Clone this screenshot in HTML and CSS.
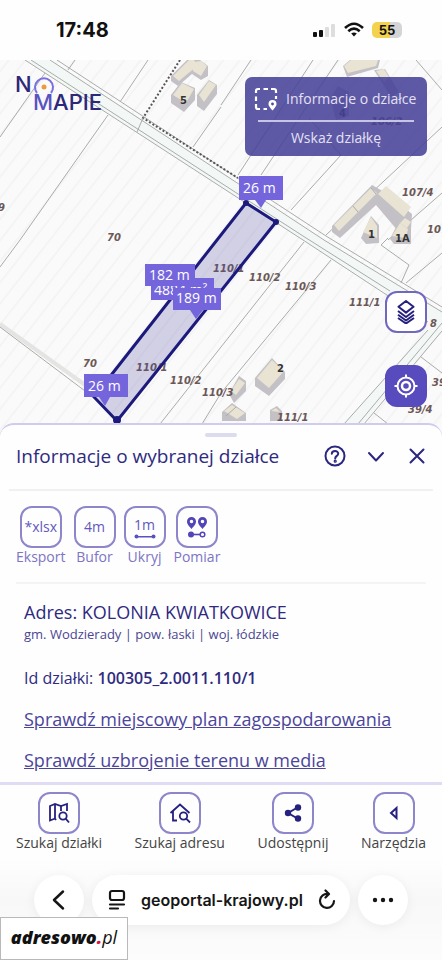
FILE: index.html
```html
<!DOCTYPE html>
<html lang="pl">
<head>
<meta charset="UTF-8">
<meta name="viewport" content="width=device-width, initial-scale=1.0">
<title>Geoportal - Informacje o działce</title>
<link rel="stylesheet" href="styles.css">
</head>
<body>
  <!-- Phone status bar -->
  <header class="status-bar">
    <span class="status-time">17:48</span>
    <div class="status-icons">
      <svg width="24" height="16" viewBox="0 0 24 16">
        <rect x="1" y="10" width="4" height="5" rx="1" fill="#111"/>
        <rect x="7" y="8" width="4" height="7" rx="1" fill="#111"/>
        <rect x="13" y="5" width="4" height="10" rx="1" fill="#ddd"/>
        <rect x="19" y="2" width="4" height="13" rx="1" fill="#ddd"/>
      </svg>
      <svg width="20" height="16" viewBox="0 0 20 16" fill="none" stroke="#111" stroke-width="2.6">
        <path d="M1 6 Q10 -2.500 19 6M4.300 9.300 Q10 4 15.700 9.300"/>
        <path d="M10 14.500 L7.200 11.600 Q10 9.400 12.800 11.600Z" fill="#111" stroke="none"/>
      </svg>
      <span class="battery">55</span>
    </div>
  </header>

  <!-- Map -->
  <main class="map">
    <svg class="map-canvas" viewBox="0 60 442 380" preserveAspectRatio="xMidYMin slice">
      <defs>
        <pattern id="furrows" width="26" height="26" patternUnits="userSpaceOnUse" patternTransform="rotate(38)">
          <path d="M5 0V26M18 0V26" stroke="#f4f4f5" stroke-width="2"/>
        </pattern>
      </defs>
      <rect y="60" width="442" height="380" fill="#fafafa"/>
      <rect y="60" width="442" height="380" fill="url(#furrows)"/>

      <!-- roads -->
      <path class="road" d="M25 60H50L324 240L442 312V328L303 240Z"/>
      <path class="road" d="M428 330L344 424H362L442 330V320Z"/>
      <path class="road-edge" d="M25 60L303 240L428 322M31 60L303 236L390 291M50 60L324 240L442 312M57 60L326 236L442 307"/>
      <path class="road-edge" d="M428 330L344 424M442 323L358 424M442 331L364 424"/>
      <path class="dotted" d="M180 60L143 118L238 178"/>

      <!-- parcel borders -->
      <path class="border" d="M45 73L0 137M75 60L68 70M148 60L120 102M108 115L20 240L0 267M221 107L193 147M143 118L137 132M251 60L221 105M313 60L238 175M338 60L261 175M309 118L341 155L291 210M442 127L326 235M416 60L442 90M442 193L388 240M304 242L221 347L160 424M331 260L221 393L202 424M442 253L406 283M381 245L409 265L401 283M381 245L388 238M421 357L442 373M374 413L388 424"/>
      <path d="M0 324L95 392" stroke="#e4e5e3" stroke-width="4"/>
      <path class="border" d="M0 327L93 397"/>

      <!-- buildings -->
      <g class="shade">
        <path d="M171 76L187 60H200L208 66V76L201 80L192 74L178 86L171 81Z"/>
        <path d="M171 95L181 82L195 88V100L184 112L171 103Z"/>
        <path d="M197 95L209 80L217 85V94L204 111L197 106Z"/>
        <path d="M343 66L350 60H380L378 68L347 77ZM374 70L385 69L399 92L391 97Z"/>
        <path d="M332 226L372 185L386 193L412 214L411 229L398 231L376 205L340 238L332 232Z"/>
        <path d="M361 238L371 216L379 225V243L366 244Z"/>
        <path d="M390 239L399 221L411 229V244H394Z"/>
        <path d="M330 98L338 86L349 92V116L336 120Z"/>
        <path d="M255 378L272 358L285 372V379L269 396L255 386Z"/>
        <path d="M229 394L239 376L246 381V391L234 403Z"/>
        <path d="M222 412L232 403L246 413V421H222ZM270 410L277 406L282 411V421H270Z"/>
      </g>
      <g class="roof">
        <path d="M173 76L189 60H194L197 66L179 81ZM193 62L201 61L207 66L201 76L193 71Z"/>
        <path d="M173 95L182 83L194 89L186 103Z"/>
        <path d="M199 95L209 81L216 85L204 102Z"/>
        <path d="M344 66L351 60H378L376 66L348 73ZM376 71L384 69L389 77L384 82Z"/>
        <path d="M334 225L371 188L377 193L339 231ZM378 194L386 186L411 207L404 217ZM400 223L405 218L411 222L407 228Z"/>
        <path d="M363 232L371 217L377 226V238Z"/>
        <path d="M392 236L400 223L408 229L406 238Z"/>
        <path d="M257 378L272 360L284 371L269 388Z"/>
        <path d="M231 391L239 379L245 383L236 395ZM224 411L232 405L245 413L237 419ZM271 411L276 408L280 412Z"/>
      </g>
      <path class="border" d="M353 206L358 212M371 188L376 194M226 416L236 407"/>

      <!-- parcel and house numbers -->
      <g class="parcel-no">
        <text x="107" y="241">70</text>
        <text x="83" y="367">70</text>
        <text x="-2" y="211">9</text>
        <text x="213" y="272">110/1</text>
        <text x="249" y="281">110/2</text>
        <text x="285" y="290">110/3</text>
        <text x="349" y="306">111/1</text>
        <text x="136" y="371">110/1</text>
        <text x="170" y="384">110/2</text>
        <text x="202" y="396">110/3</text>
        <text x="277" y="421">111/1</text>
        <text x="402" y="196">107/4</text>
        <text x="427" y="233">107/5</text>
        <text x="371" y="125">106/2</text>
        <text x="430" y="327">8</text>
        <text x="432" y="386">39/3</text>
        <text x="408" y="413">39/4</text>
      </g>
      <g class="house-no">
        <text x="180" y="104">5</text>
        <text x="339" y="117">4</text>
        <text x="368" y="238">1</text>
        <text x="395" y="242">1A</text>
        <text x="277" y="372">2</text>
      </g>

      <!-- selected parcel -->
      <path class="parcel" d="M246 203L276 222L117 421L94 397Z"/>
      <g fill="#1c1a7c">
        <circle cx="246" cy="203" r="3"/><circle cx="276" cy="222" r="3"/><circle cx="117" cy="420" r="4"/>
      </g>

      <g class="measure">
        <path d="M151 278H214V300H151Z"/>
        <text x="154" y="295">4884 m²</text>
        <path d="M239 176H283V200H266L261 208L255 200H239Z"/>
        <text x="243" y="193">26 m</text>
        <path d="M145 264H195V286H145Z"/>
        <text x="149" y="280">182 m</text>
        <path d="M173 288H221V310H203L196 319L190 310H173Z"/>
        <text x="176" y="303">189 m</text>
        <path d="M84 374H128V397H110L105 406L99 397H84Z"/>
        <text x="88" y="391">26 m</text>
      </g>

      <!-- logo -->
      <g class="logo">
        <text x="15" y="92">N</text>
        <text x="33" y="110"><tspan fill="#5a52c0">M</tspan>APIE</text>
        <path d="M37 93A9 9 0 1 1 51 93" fill="none" stroke="#7a70df" stroke-width="2"/>
        <circle cx="44" cy="87" r="2.500" fill="#ee9a3a"/>
      </g>
    </svg>

    <section class="map-panel">
      <div class="map-panel-title">
        <svg width="24" height="24" viewBox="0 0 24 24" fill="none" stroke="#fff" stroke-width="2.200">
          <path d="M2 6V4Q2 2 4 2H6M9.500 2H14M17 2H20Q22 2 22 4V6M22 9V12M2 9.500V14M2 17V20Q2 22 4 22H6M9.500 22H13"/>
          <path d="M18.500 23.500C15 19.500 14.500 18.500 14.500 17A4 4 0 0 1 22.500 17C22.500 18.500 22 19.500 18.500 23.500Z" fill="#fff" stroke="none"/>
          <circle cx="18.500" cy="17" r="1.400" fill="#4d4899" stroke="none"/>
        </svg>
        <span>Informacje o działce</span>
      </div>
      <p class="map-panel-hint">Wskaż działkę</p>
    </section>

    <div class="map-buttons">
      <button class="map-btn" type="button" aria-label="Warstwy">
        <svg width="24" height="24" viewBox="0 0 24 24" fill="none" stroke="#26217f" stroke-width="2" stroke-linejoin="round">
          <path d="M12 1L19.500 6.800L12 12.600L4.500 6.800ZM4 11L12 17L20 11M4 14.700L12 20.500L20 14.700M4 18L12 23.500L20 18"/>
        </svg>
      </button>
      <button class="map-btn map-btn-active" type="button" aria-label="Moja lokalizacja">
        <svg width="24" height="24" viewBox="0 0 24 24" fill="none" stroke="#fff" stroke-width="2">
          <circle cx="12" cy="12" r="8.500"/>
          <circle cx="12" cy="12" r="4" stroke-width="2.500"/>
          <path d="M12 .5V4M12 20V23.500M.5 12H4M20 12H23.500"/>
        </svg>
      </button>
    </div>
  </main>

  <!-- Parcel details -->
  <section class="sheet">
    <div class="sheet-handle"></div>
    <div class="sheet-header">
      <h1>Informacje o wybranej działce</h1>
      <button class="icon-btn" type="button" aria-label="Pomoc">
        <svg width="22" height="22" viewBox="0 0 22 22" fill="none" stroke="#2b267f" stroke-width="2">
          <circle cx="11" cy="11" r="9.500"/>
          <path d="M7.800 8.800C8 5 14.300 5.200 14.200 8.700C14.100 11 11.200 10.800 11.200 13.500" stroke-linecap="round"/>
          <circle cx="11.200" cy="16.200" r=".6"/>
        </svg>
      </button>
      <button class="icon-btn" type="button" aria-label="Zwiń">
        <svg width="22" height="22" viewBox="0 0 22 22" fill="none" stroke="#2b267f" stroke-width="2" stroke-linecap="round" stroke-linejoin="round"><path d="M4 8L11 15.500L18 8"/></svg>
      </button>
      <button class="icon-btn" type="button" aria-label="Zamknij">
        <svg width="22" height="22" viewBox="0 0 22 22" fill="none" stroke="#2b267f" stroke-width="2" stroke-linecap="round"><path d="M4.500 4.500L17.500 17.500M17.500 4.500L4.500 17.500"/></svg>
      </button>
    </div>

    <div class="tools">
      <button class="tool" type="button">
        <span class="tile">*xlsx</span>
        <span>Eksport</span>
      </button>
      <button class="tool" type="button">
        <span class="tile">4m</span>
        <span>Bufor</span>
      </button>
      <button class="tool" type="button">
        <span class="tile tile-stack">1m
          <svg width="22" height="5" viewBox="0 0 22 5" fill="#5a4fc4"><path d="M2 2H20V3.500H2Z"/><circle cx="2.500" cy="2.500" r="2"/><circle cx="19.500" cy="2.500" r="2"/></svg>
        </span>
        <span>Ukryj</span>
      </button>
      <button class="tool" type="button">
        <span class="tile">
          <svg width="22" height="22" viewBox="0 0 22 22" fill="#5145b8">
            <path fill-rule="evenodd" d="M5.500 13C2 9 1 7.500 1 5.500A4.500 4.500 0 0 1 10 5.500C10 7.500 9 9 5.500 13ZM5.500 3.700A1.800 1.800 0 1 0 5.500 7.300A1.800 1.800 0 1 0 5.500 3.700Z"/>
            <path fill-rule="evenodd" d="M16.500 13C13 9 12 7.500 12 5.500A4.500 4.500 0 0 1 21 5.500C21 7.500 20 9 16.500 13ZM16.500 3.700A1.800 1.800 0 1 0 16.500 7.300A1.800 1.800 0 1 0 16.500 3.700Z"/>
            <circle cx="5" cy="18.500" r="3"/>
            <path d="M5 17.700H14V19.300H5Z"/>
            <circle cx="16.500" cy="18.500" r="2.300" fill="#fff" stroke="#5145b8" stroke-width="1.500"/>
          </svg>
        </span>
        <span>Pomiar</span>
      </button>
    </div>

    <div class="details">
      <p class="address"><b>Adres: KOLONIA KWIATKOWICE</b></p>
      <p class="region">gm. Wodzierady | pow. łaski | woj. łódzkie</p>
      <p class="parcel-id">Id działki: <b>100305_2.0011.110/1</b></p>
      <a href="#plan">Sprawdź miejscowy plan zagospodarowania</a>
      <a href="#media">Sprawdź uzbrojenie terenu w media</a>
    </div>
  </section>

  <!-- Bottom navigation -->
  <nav class="bottom-nav">
    <button class="nav-item" type="button">
      <span class="tile">
        <svg width="22" height="22" viewBox="0 0 22 22" fill="none" stroke="#26217f" stroke-width="1.800">
          <path d="M8 18L7 16.500L2 18.500V4L7 2L13 4L19 2V9M7 2V16.500M13 4V9"/>
          <circle cx="15" cy="14" r="3.700"/><path d="M17.700 16.700L21 20.500"/>
        </svg>
      </span>
      <span>Szukaj działki</span>
    </button>
    <button class="nav-item" type="button">
      <span class="tile">
        <svg width="22" height="22" viewBox="0 0 22 22" fill="none" stroke="#26217f" stroke-width="1.800">
          <path d="M1.500 11L11 2.500L20.500 11M4 9V18.500H8"/>
          <circle cx="14.500" cy="14" r="3.700"/><path d="M17.200 16.700L21 20.500"/>
        </svg>
      </span>
      <span>Szukaj adresu</span>
    </button>
    <button class="nav-item" type="button">
      <span class="tile">
        <svg width="22" height="22" viewBox="0 0 22 22" fill="#26217f">
          <path d="M15.500 5.500L6 11L15.500 16.500" fill="none" stroke="#26217f" stroke-width="2"/>
          <circle cx="16" cy="5.500" r="3.200"/><circle cx="6" cy="11" r="3.200"/><circle cx="16" cy="16.500" r="3.200"/>
        </svg>
      </span>
      <span>Udostępnij</span>
    </button>
    <button class="nav-item" type="button">
      <span class="tile">
        <svg width="22" height="22" viewBox="0 0 22 22" fill="none" stroke="#26217f" stroke-width="2"><path d="M13.500 6V16L8 11Z"/></svg>
      </span>
      <span>Narzędzia</span>
    </button>
  </nav>

  <!-- Browser toolbar -->
  <footer class="browser-bar">
    <button class="round-btn" type="button" aria-label="Wstecz">
      <svg width="22" height="22" viewBox="0 0 22 22" fill="none" stroke="#161616" stroke-width="2.500" stroke-linecap="round" stroke-linejoin="round"><path d="M15 2.500L6 11L15 19.500"/></svg>
    </button>
    <div class="address-bar">
      <svg width="18" height="22" viewBox="0 0 18 22" fill="none" stroke="#161616" stroke-width="2.200" stroke-linecap="round"><rect x="2" y="2" width="14" height="9" rx="2"/><path d="M2 15.500H16M2 19.500H10"/></svg>
      <span>geoportal-krajowy.pl</span>
      <button class="reload" type="button" aria-label="Odśwież">
        <svg width="18" height="22" viewBox="0 0 18 22" fill="none" stroke="#161616" stroke-width="2.200" stroke-linecap="round" stroke-linejoin="round"><path d="M10 5A7 7 0 1 0 16 12M7.500 1.500L11 5L7.500 8.500"/></svg>
      </button>
    </div>
    <button class="round-btn" type="button" aria-label="Więcej">
      <svg width="22" height="22" viewBox="0 0 22 22" fill="#161616"><circle cx="3" cy="11" r="2.200"/><circle cx="11" cy="11" r="2.200"/><circle cx="19" cy="11" r="2.200"/></svg>
    </button>
  </footer>

  <div class="watermark"><b>adresowo<i>.</i></b>pl</div>
</body>
</html>
```
FILE: styles.css
```css
* {
  box-sizing: border-box;
}

body {
  margin: 0;
  min-height: 100vh;
  display: flex;
  flex-direction: column;
  position: relative;
  font-family: "Open Sans", "Noto Sans", sans-serif;
  color: #2f2a80;
  background-color: #fefefe;
}

button {
  font: inherit;
  color: inherit;
  background: none;
  border: none;
  padding: 0;
  cursor: pointer;
}

svg {
  display: block;
}

h1, p {
  margin: 0;
}

/* Status bar */
.status-bar {
  height: 60px;
  padding: 0 40px 0 56px;
  display: flex;
  justify-content: space-between;
  align-items: center;
  font-family: Inter, sans-serif;
  color: #111;
}

.status-time {
  font-size: 20px;
  font-weight: 700;
}

.status-icons {
  display: flex;
  align-items: center;
  gap: 8px;
}

.battery {
  width: 30px;
  border-radius: 5px;
  font-size: 13px;
  line-height: 16px;
  font-weight: 700;
  text-align: center;
  background: linear-gradient(90deg, #f3d250 60%, #d5d5d5 60%);
}

/* Map */
.map {
  flex: 1 1 0;
  min-height: 320px;
  display: flex;
  position: relative;
  overflow: hidden;
}

.map-canvas {
  flex: 1;
  width: 100%;
  min-width: 0;
}

.road {
  fill: #f3f7f5;
}

.road-edge,
.border,
.dotted {
  fill: none;
  stroke: #a9ada9;
}

.dotted {
  stroke: #555;
  stroke-width: 2;
  stroke-dasharray: 2 2;
}

.shade {
  fill: #c3c1c6;
}

.roof {
  fill: #e8e3d3;
}

.parcel-no {
  font: italic bold 10px "DejaVu Sans", sans-serif;
  fill: #6b5757;
}

.house-no {
  font: bold 10px "DejaVu Sans", sans-serif;
  fill: #333;
}

.parcel {
  fill: rgba(80, 76, 165, 0.24);
  stroke: #1c1a7c;
  stroke-width: 3;
}

.measure {
  font-size: 14px;
  font-weight: 500;
}

.measure path {
  fill: #7565dc;
}

.measure text {
  fill: #fff;
}

.logo {
  font: 500 22px Inter, sans-serif;
  fill: #2d2878;
}

.map-panel {
  position: absolute;
  top: 17px;
  right: 15px;
  width: 182px;
  height: 79px;
  padding: 8px 9px;
  border-radius: 7px;
  background-color: rgba(70, 64, 152, 0.87);
  color: #e4e1f5;
  font-size: 14px;
  line-height: 28px;
}

.map-panel-title {
  display: flex;
  align-items: center;
  gap: 8px;
  white-space: nowrap;
}

.map-panel-hint {
  margin: 7px 4px 0;
  border-top: 2px solid #c8c4e6;
  text-align: center;
  line-height: 32px;
}

.map-buttons {
  position: absolute;
  right: 15px;
  bottom: 28px;
  display: grid;
  gap: 32px;
}

.map-btn {
  width: 42px;
  height: 42px;
  display: grid;
  place-items: center;
  border: 2px solid #6f68bd;
  border-radius: 12px;
  background-color: #fff;
}

.map-btn-active {
  border-color: #574bbd;
  background-color: #574bbd;
}

/* Details sheet */
.sheet {
  margin-top: -12px;
  position: relative;
  background-color: #fefefe;
  border-top: 2px solid #d0ccee;
  border-radius: 14px 14px 0 0;
}

.sheet-handle {
  width: 32px;
  height: 4px;
  margin: 8px auto 0;
  border-radius: 2px;
  background-color: #dddbee;
}

.sheet-header {
  margin: 0 9px;
  padding: 0 5px 14px 7px;
  display: flex;
  align-items: center;
  gap: 19px;
  border-bottom: 2px solid #f0f0f2;
}

.sheet-header h1 {
  flex: 1;
  font-size: 19px;
  line-height: 38px;
  font-weight: 500;
  white-space: nowrap;
}

.icon-btn {
  flex: none;
}

.tools {
  margin: 0 16px;
  padding: 15px 0 16px;
  display: flex;
  gap: 8px;
  border-bottom: 2px solid #f4f4f5;
}

.tool,
.nav-item {
  display: flex;
  flex-direction: column;
  align-items: center;
  font-size: 14px;
  line-height: 18px;
}

.tool {
  color: #7d74c4;
}

.tile {
  width: 42px;
  height: 42px;
  display: grid;
  place-items: center;
  border: 2px solid #8d86cb;
  border-radius: 12px;
  font-size: 14px;
  font-weight: 500;
  color: #6258bd;
}

.tile-stack {
  align-content: center;
}

.details {
  padding: 16px 24px 10px;
  display: flex;
  flex-direction: column;
  align-items: flex-start;
  font-size: 18px;
  line-height: 24px;
}

.details b {
  font-weight: 500;
}

.region {
  font-size: 13px;
  line-height: 20px;
  color: #4b4692;
}

.parcel-id {
  margin-top: 22px;
  font-size: 16px;
}

.details .parcel-id b {
  font-weight: 600;
}

.details a {
  margin-top: 17px;
  color: #4b459a;
}

/* Bottom navigation */
.bottom-nav {
  padding: 7px 16px;
  display: flex;
  justify-content: space-between;
  border-top: 3px solid #dfdcf4;
  color: #444;
}

/* Browser toolbar */
.browser-bar {
  padding: 16px 34px 35px;
  display: flex;
  gap: 8px;
  background: linear-gradient(#fefefe, #f8f8f8 40%, #fcfcfc);
}

.round-btn,
.address-bar {
  height: 50px;
  border-radius: 25px;
  background-color: #fff;
  box-shadow: 0 2px 12px rgba(0, 0, 0, 0.06);
}

.round-btn {
  width: 50px;
  display: grid;
  place-items: center;
}

.address-bar {
  flex: 1;
  padding: 0 14px 0 16px;
  display: flex;
  align-items: center;
  justify-content: space-between;
  font: 600 16px Inter, sans-serif;
  color: #161616;
}

.watermark {
  position: absolute;
  left: 0;
  bottom: 0;
  width: 128px;
  height: 43px;
  border: 1px solid #b9b9b9;
  background-color: #fff;
  color: #111;
  font: italic 18px/39px "Open Sans", sans-serif;
  text-align: center;
}

.watermark b {
  font-weight: 800;
}

.watermark i {
  color: #d8123c;
}
```
